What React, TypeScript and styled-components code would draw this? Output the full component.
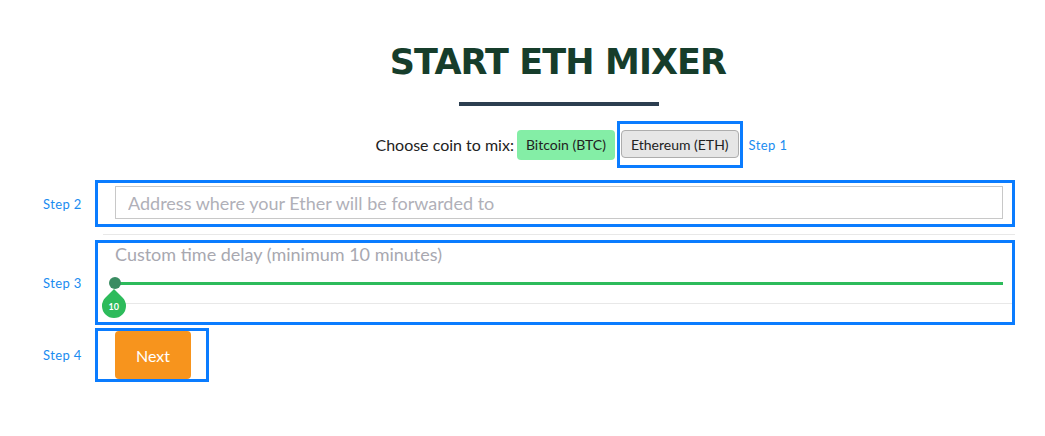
import React, { useState } from 'react';
import styled, { createGlobalStyle } from 'styled-components';

const GlobalStyle = createGlobalStyle`
  body {
    margin: 0;
    background: #fff;
    font-family: Lato, "Open Sans", sans-serif;
  }
`;

export default function App() {
  const [coin, setCoin] = useState('ETH');
  const [delay] = useState(10);

  return (
    <>
      <GlobalStyle />
      <Page>
        <Main>
          <Title>START ETH MIXER</Title>
          <Underline />
          <CoinRow>
            <CoinLabel>Choose coin to mix:</CoinLabel>
            <CoinButton $variant="btc" onClick={() => setCoin('BTC')}>
              Bitcoin (BTC)
            </CoinButton>
            <EthWrap>
              <CoinButton $variant="eth" onClick={() => setCoin('ETH')}>
                Ethereum (ETH)
              </CoinButton>
              <StepOne>Step 1</StepOne>
            </EthWrap>
          </CoinRow>
        </Main>

        <StepRow $top={12}>
          <StepLabel>Step 2</StepLabel>
          <AddressBox>
            <AddressInput placeholder="Address where your Ether will be forwarded to" />
          </AddressBox>
        </StepRow>
        <Divider />

        <StepRow $top={5}>
          <StepLabel>Step 3</StepLabel>
          <DelayBox>
            <DelayTitle>Custom time delay (minimum 10 minutes)</DelayTitle>
            <Slider>
              <Track />
              <Handle />
              <Bubble>
                <BubbleText>{delay}</BubbleText>
              </Bubble>
            </Slider>
            <DelayLine />
          </DelayBox>
        </StepRow>

        <StepRow $top={3}>
          <StepLabel>Step 4</StepLabel>
          <NextBox>
            <NextButton data-coin={coin}>Next</NextButton>
          </NextBox>
        </StepRow>
      </Page>
    </>
  );
}

const Page = styled.div`
  width: 1015px;
  padding-top: 35px;
`;

const Main = styled.div`
  margin-left: 95px;
  width: 920px;
  display: flex;
  flex-direction: column;
  align-items: center;
`;

const Title = styled.h1`
  margin: 0;
  font-family: "DejaVu Sans", sans-serif;
  font-weight: 700;
  font-size: 35px;
  line-height: 54px;
  color: #163d2b;
  letter-spacing: -0.9px;
  transform: translateX(3px);
`;

const Underline = styled.div`
  width: 200px;
  height: 4px;
  background: #2c3e50;
  margin-top: 13px;
  transform: translateX(4px);
`;

const CoinRow = styled.div`
  display: flex;
  align-items: center;
  margin-top: 15px;
  transform: translateX(4px);
`;

const CoinLabel = styled.span`
  font-size: 16px;
  color: #222;
  margin-right: 3px;
`;

const EthWrap = styled.div`
  position: relative;
  border: 3px solid #0a7cff;
  padding: 6px 0 7px 0;
  margin-left: 2px;
  display: flex;
`;

const CoinButton = styled.button<{ $variant: 'btc' | 'eth' }>`
  font-family: Lato, sans-serif;
  font-size: 14px;
  color: #222;
  height: ${p => (p.$variant === 'btc' ? '30px' : '28px')};
  padding: 0 9px;
  border-radius: 4px;
  cursor: pointer;
  background: ${p => (p.$variant === 'btc' ? '#84eea6' : '#e6e6e6')};
  border: ${p => (p.$variant === 'btc' ? '0' : '1px solid #adadad')};
  margin: ${p => (p.$variant === 'btc' ? '0' : '0 1px')};
`;

const StepOne = styled.span`
  position: absolute;
  left: calc(100% + 9px);
  top: 50%;
  transform: translateY(-50%);
  font-size: 13px;
  color: #1a8cf0;
  white-space: nowrap;
  letter-spacing: 0.4px;
`;

const StepRow = styled.div<{ $top: number }>`
  display: flex;
  align-items: center;
  margin-top: ${p => p.$top}px;
`;

const StepLabel = styled.div`
  width: 95px;
  padding-left: 43px;
  box-sizing: border-box;
  font-size: 13px;
  color: #1a8cf0;
  letter-spacing: 0.4px;
`;

const Highlight = styled.div`
  border: 3px solid #0a7cff;
  box-sizing: border-box;
`;

const AddressBox = styled(Highlight)`
  width: 920px;
  padding: 3px 9px 5px 17px;
`;

const AddressInput = styled.input`
  display: block;
  width: 100%;
  box-sizing: border-box;
  height: 33px;
  border: 1px solid #c8c8c8;
  padding: 0 12px;
  font-family: Lato, sans-serif;
  font-size: 18px;
  color: #333;
  outline: none;
  &::placeholder {
    color: #b0b0b8;
  }
`;

const Divider = styled.div`
  margin: 7px 0 0 103px;
  width: 912px;
  height: 1px;
  background: #e8e8e8;
`;

const DelayBox = styled(Highlight)`
  width: 920px;
  height: 85px;
  padding: 0 9px 0 17px;
  display: flex;
  flex-direction: column;
  position: relative;
`;

const DelayTitle = styled.div`
  font-size: 18px;
  color: #a8a8b0;
  margin-top: 0;
  line-height: 22px;
`;

const Slider = styled.div`
  position: relative;
  height: 12px;
  margin-top: 12px;
`;

const Track = styled.div`
  position: absolute;
  left: 0;
  right: 0;
  top: 5px;
  height: 3px;
  background: #2dbb5b;
`;

const Handle = styled.div`
  position: absolute;
  left: -6px;
  top: 0;
  width: 12px;
  height: 12px;
  border-radius: 50%;
  background: #3a8c62;
`;

const Bubble = styled.div`
  position: absolute;
  left: -13px;
  top: 17px;
  width: 24px;
  height: 24px;
  background: #2dbb5b;
  border-radius: 0 50% 50% 50%;
  transform: rotate(45deg);
  display: flex;
  align-items: center;
  justify-content: center;
  z-index: 1;
`;

const BubbleText = styled.span`
  transform: rotate(-45deg);
  font-size: 9px;
  font-weight: 700;
  color: #fff;
`;

const DelayLine = styled.div`
  position: absolute;
  left: 4px;
  right: 0;
  top: 60px;
  height: 1px;
  background: #e8e8e8;
`;

const NextBox = styled(Highlight)`
  width: 114px;
  height: 54px;
  padding: 0 15px 0 17px;
  display: flex;
  align-items: center;
`;

const NextButton = styled.button`
  width: 76px;
  height: 48px;
  border: 0;
  border-radius: 4px;
  background: #f7941d;
  color: #fff;
  font-family: Lato, sans-serif;
  font-size: 16px;
  cursor: pointer;
`;
